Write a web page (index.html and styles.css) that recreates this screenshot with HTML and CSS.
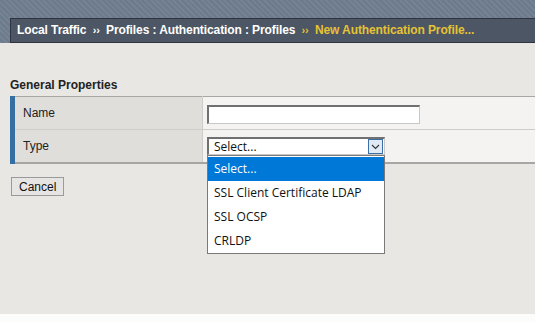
FILE: index.html
```html
<!DOCTYPE html>
<html lang="en">
<head>
    <meta charset="UTF-8">
    <title>New Authentication Profile</title>
    <link rel="stylesheet" href="styles.css">
</head>
<body>
    <div class="top-band">
        <div class="crumbs">
            Local Traffic <span class="sep">&rsaquo;&rsaquo;</span> Profiles : Authentication : Profiles
            <span class="sep current">&rsaquo;&rsaquo;</span> <span class="current">New Authentication Profile...</span>
        </div>
    </div>

    <div class="content">
        <h3 class="section-title">General Properties</h3>
        <table class="props">
            <tr>
                <td class="label">Name</td>
                <td class="value"><input type="text" class="text-input"></td>
            </tr>
            <tr>
                <td class="label">Type</td>
                <td class="value">
                    <div class="select-wrap">
                        <div class="select-box">
                            <span>Select...</span>
                            <span class="arrow">
                                <svg width="13" height="13" viewBox="0 0 13 13"><path d="M3 5 L6.5 8.5 L10 5" fill="none" stroke="#333" stroke-width="1.1"/></svg>
                            </span>
                        </div>
                        <ul class="options">
                            <li class="selected">Select...</li>
                            <li>SSL Client Certificate LDAP</li>
                            <li>SSL OCSP</li>
                            <li>CRLDP</li>
                        </ul>
                    </div>
                </td>
            </tr>
        </table>
        <button type="button" class="cancel">Cancel</button>
    </div>
    <div class="bottom-strip"></div>
</body>
</html>
```

FILE: styles.css
```css
body {
    margin: 0;
    background-color: #e9e7e3;
    font-family: "Liberation Sans", Arial, sans-serif;
    font-size: 12px;
    color: #222;
    height: 322px;
    overflow: hidden;
    display: flex;
    flex-direction: column;
}

.top-band {
    height: 43px;
    padding-top: 18px;
    padding-left: 10px;
    box-sizing: border-box;
    background-color: #6f7e8f;
    background-image: repeating-linear-gradient(45deg, rgba(255,255,255,0.04) 0 2px, rgba(0,0,0,0.03) 2px 4px);
}

.crumbs {
    height: 25px;
    box-sizing: border-box;
    padding: 4px 0 0 6px;
    background-color: #4c5664;
    border: 1px solid #2e3540;
    border-right: none;
    color: #ffffff;
    font-weight: bold;
    font-size: 12px;
    letter-spacing: -0.1px;
    white-space: nowrap;
}

.crumbs .sep {
    font-size: 11px;
    margin: 0 3px;
}

.crumbs .current {
    color: #e6c235;
}

.content {
    flex: 1;
    padding: 35px 0 0 10px;
}

.section-title {
    margin: 0 0 4px 0;
    font-size: 12px;
    font-weight: bold;
    color: #222;
}

.props {
    width: 100%;
    border-collapse: collapse;
    border-top: 1px solid #a8a6a2;
    border-bottom: 2px solid #a8a6a2;
}

.props td {
    height: 32px;
    padding: 0;
    border-bottom: 1px solid #cfcdc9;
}

.props tr:last-child td {
    border-bottom: none;
}

.props .label {
    width: 179px;
    padding-left: 8px;
    background-color: #e0dedb;
    border-left: 5px solid #356ea3;
    border-right: 1px solid #cfcdc9;
    color: #222;
}

.props .value {
    padding-left: 4px;
    background-color: #f4f3f1;
}

.text-input {
    width: 213px;
    height: 19px;
    box-sizing: border-box;
    margin-top: 2px;
    border: 1px solid #c8c8c8;
    border-top: 2px solid #707070;
    border-left: 2px solid #707070;
    background: #ffffff;
}

.select-wrap {
    position: relative;
    width: 178px;
}

.select-box {
    height: 18px;
    box-sizing: border-box;
    display: flex;
    align-items: center;
    justify-content: space-between;
    padding-left: 5px;
    background: #ffffff;
    border: 1px solid #c8c8c8;
    border-top: 2px solid #707070;
    border-left: 2px solid #707070;
    font-family: "Open Sans", "Noto Sans", sans-serif;
    font-size: 12px;
    color: #111;
}

.select-box .arrow {
    width: 15px;
    height: 15px;
    box-sizing: border-box;
    border: 1px solid #3c6fa8;
    background: #dfeaf6;
    display: flex;
    align-items: center;
    justify-content: center;
    margin-right: 1px;
}

.options {
    position: absolute;
    top: 18px;
    left: 0;
    width: 178px;
    box-sizing: border-box;
    margin: 0;
    padding: 1px 0 0 0;
    list-style: none;
    background: #ffffff;
    border: 1px solid #7a7a7a;
    font-family: "Open Sans", "Noto Sans", sans-serif;
    font-size: 12px;
    color: #111;
}

.options li {
    height: 24px;
    line-height: 24px;
    padding-left: 6px;
}

.options li.selected {
    background-color: #0078d7;
    color: #ffffff;
}

.cancel {
    margin-top: 13px;
    margin-left: 1px;
    padding: 1px 7px;
    height: 19px;
    font-family: "Liberation Sans", Arial, sans-serif;
    font-size: 12px;
    color: #111;
    background: #e6e5e3;
    border: 1px solid #9a9a9a;
    border-radius: 0;
}

.bottom-strip {
    height: 8px;
    background: #fcfcfa;
}
```
